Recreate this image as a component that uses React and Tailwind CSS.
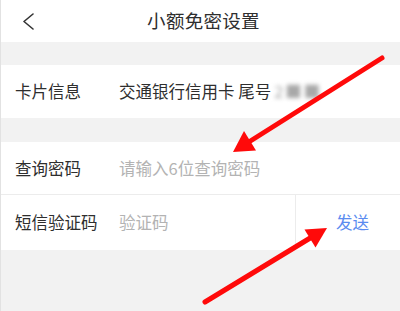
import React from "react";

export default function App() {
  const font = { fontFamily: '"Noto Sans CJK SC", "Noto Sans", sans-serif' };
  return (
    <div className="relative w-[400px] h-[311px] overflow-hidden bg-[#f2f2f2] text-[#2e2e2e]" style={font}>
      <div className="flex flex-col h-full border-l border-[#e2e2e2]">
        <div className="relative flex items-center justify-center h-[42px] bg-white shrink-0">
          <svg className="absolute left-[19px] top-[12px]" width="16" height="18" viewBox="0 0 16 18">
            <path d="M13 2 L4 9.5 L13 17" fill="none" stroke="#333" strokeWidth="1.6" strokeLinecap="round" strokeLinejoin="round" />
          </svg>
          <span className="text-[18.5px] leading-none tracking-[0.3px] mt-[-2px] ml-[6px]">小额免密设置</span>
        </div>
        <div className="h-[23px] shrink-0" />
        <div className="flex items-center h-[53px] bg-white shrink-0 text-[16.5px]">
          <span className="w-[118px] pl-[14px]">卡片信息</span>
          <span>交通银行信用卡 尾号</span>
          <span className="text-[#a8a8a8] blur-[2px] ml-[3px] tracking-[2px]">2■■</span>
        </div>
        <div className="h-[24px] shrink-0" />
        <div className="flex items-center h-[53px] bg-white shrink-0 text-[16.5px] border-b border-[#ececec]">
          <span className="w-[118px] pl-[14px]">查询密码</span>
          <span className="text-[#b3b3b3]">请输入6位查询密码</span>
        </div>
        <div className="flex items-stretch h-[55px] bg-white shrink-0 text-[16.5px]">
          <div className="flex items-center w-[295px] border-r border-[#ececec]">
            <span className="w-[118px] pl-[14px]">短信验证码</span>
            <span className="text-[#b3b3b3]">验证码</span>
          </div>
          <div className="flex items-center pl-[40px] text-[#5b8cf0]">发送</div>
        </div>
        <div className="flex-1" />
      </div>
      <svg className="absolute inset-0 pointer-events-none" width="400" height="311" viewBox="0 0 400 311">
        <line x1="382" y1="58" x2="248" y2="142.5" stroke="#ff0a0a" strokeWidth="5" strokeLinecap="round" />
        <polygon points="233,152 256,150.5 244,131" fill="#ff0a0a" />
        <line x1="205" y1="302" x2="311" y2="237.5" stroke="#ff0a0a" strokeWidth="5" strokeLinecap="round" />
        <polygon points="327,228 315.5,247.5 304.5,229.5" fill="#ff0a0a" />
      </svg>
    </div>
  );
}
